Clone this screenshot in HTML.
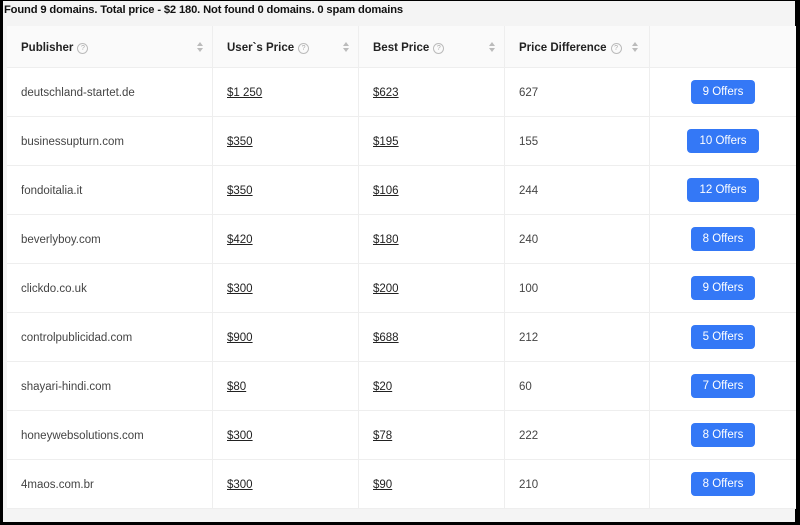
<!DOCTYPE html>
<html><head><style>
html,body{margin:0;padding:0}
body{width:800px;height:525px;background:#000;position:relative;overflow:hidden;font-family:"Liberation Sans",sans-serif}
.page{position:absolute;left:3px;top:1px;width:792px;height:521px;background:#f4f4f4}
.title{position:absolute;left:1px;top:3px;font-size:11.2px;font-weight:bold;color:#111;letter-spacing:-0.15px}
table{position:absolute;left:4px;top:25px;width:789px;border-collapse:collapse;background:#fff;font-size:11.5px;color:#444}
th{background:#fafafa;height:39px;text-align:left;font-weight:bold;color:#222;padding:2px 0 0 14px;border-right:1px solid #eee;border-bottom:1px solid #eee;position:relative}
td{height:47px;padding:1px 0 0 14px;border-right:1px solid #eee;border-bottom:1px solid #eee}
th:last-child,td:last-child{border-right:none}
td u{color:#222}
.q{display:inline-block;width:9px;height:9px;border:1px solid #bbb;border-radius:50%;font-size:7px;color:#aaa;text-align:center;line-height:9px;margin-left:4px;vertical-align:1px;font-weight:normal}
.s{position:absolute;right:12px;top:16px;width:0;height:0}
.s:before{content:"";position:absolute;left:-3px;top:0;border:3px solid transparent;border-bottom:4px solid #bbb;border-top:0}
.s:after{content:"";position:absolute;left:-3px;top:6px;border:3px solid transparent;border-top:4px solid #bbb;border-bottom:0}
.b{text-align:center;padding:0}
.b span{display:inline-block;background:#3478f6;color:#fff;border-radius:4px;height:24px;line-height:24px;padding:0 12px;font-size:11.5px}
</style></head><body>
<div class="page">
<div class="title">Found 9 domains. Total price - $2 180. Not found 0 domains. 0 spam domains</div>
<table>
<tr><th style="width:191px">Publisher<span class="q">?</span><i class="s"></i></th><th style="width:131px">User`s Price<span class="q">?</span><i class="s"></i></th><th style="width:131px">Best Price<span class="q">?</span><i class="s"></i></th><th style="width:130px">Price Difference<span class="q">?</span><i class="s" style="right:14px"></i></th><th style="padding:0"></th></tr>
<tr><td>deutschland-startet.de</td><td><u>$1 250</u></td><td><u>$623</u></td><td>627</td><td class="b"><span>9 Offers</span></td></tr>
<tr><td>businessupturn.com</td><td><u>$350</u></td><td><u>$195</u></td><td>155</td><td class="b"><span>10 Offers</span></td></tr>
<tr><td>fondoitalia.it</td><td><u>$350</u></td><td><u>$106</u></td><td>244</td><td class="b"><span>12 Offers</span></td></tr>
<tr><td>beverlyboy.com</td><td><u>$420</u></td><td><u>$180</u></td><td>240</td><td class="b"><span>8 Offers</span></td></tr>
<tr><td>clickdo.co.uk</td><td><u>$300</u></td><td><u>$200</u></td><td>100</td><td class="b"><span>9 Offers</span></td></tr>
<tr><td>controlpublicidad.com</td><td><u>$900</u></td><td><u>$688</u></td><td>212</td><td class="b"><span>5 Offers</span></td></tr>
<tr><td>shayari-hindi.com</td><td><u>$80</u></td><td><u>$20</u></td><td>60</td><td class="b"><span>7 Offers</span></td></tr>
<tr><td>honeywebsolutions.com</td><td><u>$300</u></td><td><u>$78</u></td><td>222</td><td class="b"><span>8 Offers</span></td></tr>
<tr><td>4maos.com.br</td><td><u>$300</u></td><td><u>$90</u></td><td>210</td><td class="b"><span>8 Offers</span></td></tr>
</table>
</div>
</body></html>
